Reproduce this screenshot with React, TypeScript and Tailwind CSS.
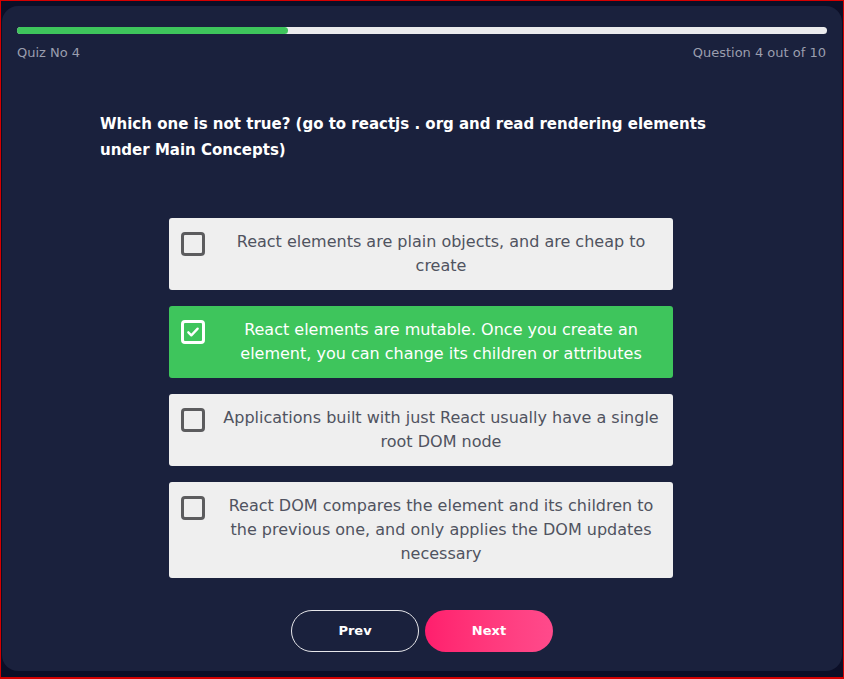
import { useState } from 'react';

const options = [
  'React elements are plain objects, and are cheap to create',
  'React elements are mutable. Once you create an element, you can change its children or attributes',
  'Applications built with just React usually have a single root DOM node',
  'React DOM compares the element and its children to the previous one, and only applies the DOM updates necessary',
];

function CheckBox({ checked }: { checked: boolean }) {
  if (checked) {
    return (
      <div className="flex h-6 w-6 shrink-0 items-center justify-center rounded-[4px] border-[3px] border-white">
        <svg viewBox="0 0 24 24" className="h-4 w-4" fill="none" stroke="white" strokeWidth={3.5} strokeLinecap="round" strokeLinejoin="round">
          <path d="M5 12.5l4.5 4.5L19 7" />
        </svg>
      </div>
    );
  }
  return <div className="h-6 w-6 shrink-0 rounded-[4px] border-[3px] border-[#5c5c5e]" />;
}

export default function App() {
  const [selected, setSelected] = useState(1);

  return (
    <div
      className="h-[679px] w-[844px] border border-b-2 border-[#d40000] bg-[#0c0f27] pl-[1px] pr-[1px] pt-[5px]"
      style={{ fontFamily: '"DejaVu Sans", sans-serif' }}
    >
      <div className="flex h-[665px] flex-col rounded-[16px] bg-[#1a213d] px-[15px] pt-[21px]">
        {/* Progress */}
        <div className="h-[7px] w-full rounded-full bg-[#ebebed]">
          <div className="h-full w-[33.5%] rounded-full bg-[#3ec55c]" />
        </div>
        <div className="mt-[9px] flex justify-between text-[13px] leading-5 text-[#9a9eae]">
          <span>Quiz No 4</span>
          <span className="pr-[1px]">Question 4 out of 10</span>
        </div>

        {/* Question */}
        <h2 className="mx-auto mt-[48px] w-[644px] text-[15px] font-semibold leading-[26px] text-white">
          Which one is not true? (go to reactjs . org and read rendering elements under Main Concepts)
        </h2>

        {/* Options */}
        <div className="ml-[152px] mt-[55px] flex w-[504px] flex-col gap-4">
          {options.map((opt, i) => {
            const active = i === selected;
            return (
              <button
                key={i}
                type="button"
                onClick={() => setSelected(i)}
                className={`flex items-start rounded-[3px] px-3 py-3 text-left ${
                  active ? 'bg-[#3ec55c] text-white' : 'bg-[#efefef] text-[#505360]'
                }`}
              >
                <div className="pt-[2px]">
                  <CheckBox checked={active} />
                </div>
                <span className="ml-4 flex-1 text-center text-[16px] leading-6">{opt}</span>
              </button>
            );
          })}
        </div>

        {/* Nav */}
        <div className="ml-[274px] mt-[32px] flex gap-[6px]">
          <button
            type="button"
            className="h-[42px] w-[128px] rounded-full border border-[#e6e6ea] text-[13px] font-semibold text-white"
          >
            Prev
          </button>
          <button
            type="button"
            className="h-[42px] w-[128px] rounded-full bg-gradient-to-r from-[#ff1e6d] to-[#ff4a8b] text-[13px] font-semibold text-white"
          >
            Next
          </button>
        </div>
      </div>
    </div>
  );
}
